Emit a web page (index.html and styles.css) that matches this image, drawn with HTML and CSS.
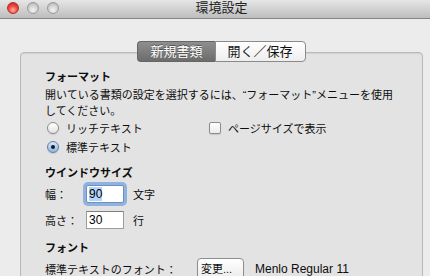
FILE: index.html
```html
<!DOCTYPE html>
<html lang="ja">
<head>
  <meta charset="UTF-8">
  <title>環境設定</title>
  <link rel="stylesheet" href="styles.css">
</head>
<body>
  <div class="window">
    <div class="titlebar">
      <div class="lights">
        <span class="light close"></span>
        <span class="light"></span>
        <span class="light"></span>
      </div>
      <div class="title">環境設定</div>
      <div></div>
    </div>

    <div class="tabview">
      <div class="tabs">
        <span class="tab active">新規書類</span>
        <span class="tab">開く／保存</span>
      </div>

      <div class="pane">
        <h2 class="heading">フォーマット</h2>
        <p class="desc">開いている書類の設定を選択するには、“フォーマット”メニューを使用<br>してください。</p>
        <div class="format-grid">
          <label class="option"><span class="radio"></span>リッチテキスト</label>
          <label class="option"><span class="check"></span>ページサイズで表示</label>
          <label class="option"><span class="radio on"></span>標準テキスト</label>
        </div>

        <h2 class="heading gap-top">ウインドウサイズ</h2>
        <div class="size-row">
          <span class="size-label">幅：</span>
          <span class="field focus"><span class="sel">90</span></span>
          <span class="unit">文字</span>
        </div>
        <div class="size-row second">
          <span class="size-label">高さ：</span>
          <span class="field">30</span>
          <span class="unit">行</span>
        </div>

        <h2 class="heading font-head">フォント</h2>
        <div class="font-row">
          <span class="font-label">標準テキストのフォント：</span>
          <span class="button">変更...</span>
          <span class="font-name">Menlo Regular 11</span>
        </div>
      </div>
    </div>
  </div>
</body>
</html>
```

FILE: styles.css
```css
body {
  margin: 0;
  width: 430px;
  height: 276px;
  overflow: hidden;
  background-color: #ececec;
  font-family: "Liberation Sans", "Noto Sans CJK JP", sans-serif;
  font-size: 11px;
  color: #0d0d0d;
}
.window {
  width: 443px;
  height: 276px;
  overflow: hidden;
  background-color: #ececec;
}

/* Title bar */
.titlebar {
  display: grid;
  grid-template-columns: 1fr auto 1fr;
  align-items: center;
  height: 15px;
  padding-bottom: 3px;
  background: linear-gradient(#e6e6e6, #bdbdbd);
  border-bottom: 1px solid #858585;
}
.lights {
  display: flex;
  gap: 8px;
  padding-left: 7px;
}
.light {
  width: 10px;
  height: 10px;
  border-radius: 50%;
  border: 1px solid #9a9a9a;
  background: radial-gradient(circle at 50% 70%, #f4f4f4 0%, #cfcfcf 55%, #a9a9a9 100%);
}
.light.close {
  border-color: #a8362f;
  background: radial-gradient(circle at 50% 70%, #ffb3a8 0%, #f2453a 50%, #b8201a 100%);
}
.title {
  font-size: 13px;
  line-height: 15px;
  color: #222;
}

/* Tab view */
.tabview {
  margin: 22px 20px 0;
}
.tabs {
  display: flex;
  justify-content: center;
  position: relative;
  z-index: 1;
  margin-bottom: -10px;
}
.tab {
  font-size: 13px;
  line-height: 19px;
  padding: 0 12px;
  border: 1px solid #8a8a8a;
  background: linear-gradient(#ffffff, #eeeeee);
  color: #111;
}
.tab:first-child {
  border-radius: 4px 0 0 4px;
  border-right: none;
}
.tab:last-child {
  border-radius: 0 4px 4px 0;
}
.tab.active {
  background: linear-gradient(#8f8f8f, #6c6c6c);
  border-color: #666;
  color: #fff;
  text-shadow: 0 -1px 0 rgba(0, 0, 0, 0.4);
}
.pane {
  height: 215px;
  padding: 16px 24px 0;
  background-color: #e3e3e3;
  border: 1px solid #b9b9b9;
  border-radius: 4px;
  box-shadow: inset 0 1px 1px rgba(0, 0, 0, 0.08);
}

.heading {
  margin: 0;
  font-size: 11px;
  font-weight: bold;
  line-height: 16px;
}
.heading.gap-top {
  margin-top: 9px;
}
.heading.font-head {
  margin-top: 11px;
}
.desc {
  margin: 2px 0 0;
  line-height: 16px;
}

/* Format options */
.format-grid {
  display: grid;
  grid-template-columns: 164px auto;
  row-gap: 1px;
}
.option {
  display: flex;
  align-items: center;
  height: 18px;
}
.radio {
  width: 10px;
  height: 10px;
  margin: 0 7px 0 2px;
  border-radius: 50%;
  border: 1px solid #8c8c8c;
  background: linear-gradient(#ffffff, #e4e4e4);
  box-shadow: 0 1px 1px rgba(0, 0, 0, 0.12);
  display: flex;
  align-items: center;
  justify-content: center;
}
.radio.on {
  border-color: #5f7ea8;
  background: linear-gradient(#d8e7f8, #8fb6e6);
}
.radio.on::after {
  content: "";
  width: 4px;
  height: 4px;
  border-radius: 50%;
  background-color: #1a1a1a;
}
.check {
  width: 10px;
  height: 10px;
  margin-right: 7px;
  border: 1px solid #8c8c8c;
  border-radius: 2px;
  background: linear-gradient(#ffffff, #ececec);
  box-shadow: 0 1px 1px rgba(0, 0, 0, 0.12);
}

/* Window size */
.size-row {
  display: flex;
  align-items: center;
  height: 18px;
  margin-top: 4px;
}
.size-row.second {
  margin-top: 8px;
}
.size-label {
  width: 41px;
}
.field {
  box-sizing: border-box;
  width: 38px;
  height: 18px;
  padding: 0 2px;
  border: 1px solid #9c9c9c;
  border-top-color: #7e7e7e;
  background-color: #fff;
  font-size: 12px;
  line-height: 16px;
  color: #000;
}
.field.focus {
  border-color: #6e8fbe;
  border-radius: 2px;
  box-shadow: 0 0 0 3px rgba(108, 156, 222, 0.7);
}
.sel {
  background-color: #b4d4fc;
}
.unit {
  margin-left: 9px;
}

/* Font */
.font-row {
  display: flex;
  align-items: center;
  height: 22px;
  margin-top: 2px;
}
.font-label {
  width: 152px;
}
.button {
  box-sizing: border-box;
  width: 47px;
  height: 22px;
  padding-left: 3px;
  line-height: 20px;
  border: 1px solid #8e8e8e;
  border-radius: 4px;
  background: linear-gradient(#ffffff, #ebebeb);
  box-shadow: 0 1px 1px rgba(0, 0, 0, 0.12);
}
.font-name {
  margin-left: 11px;
  font-size: 12px;
}
```
